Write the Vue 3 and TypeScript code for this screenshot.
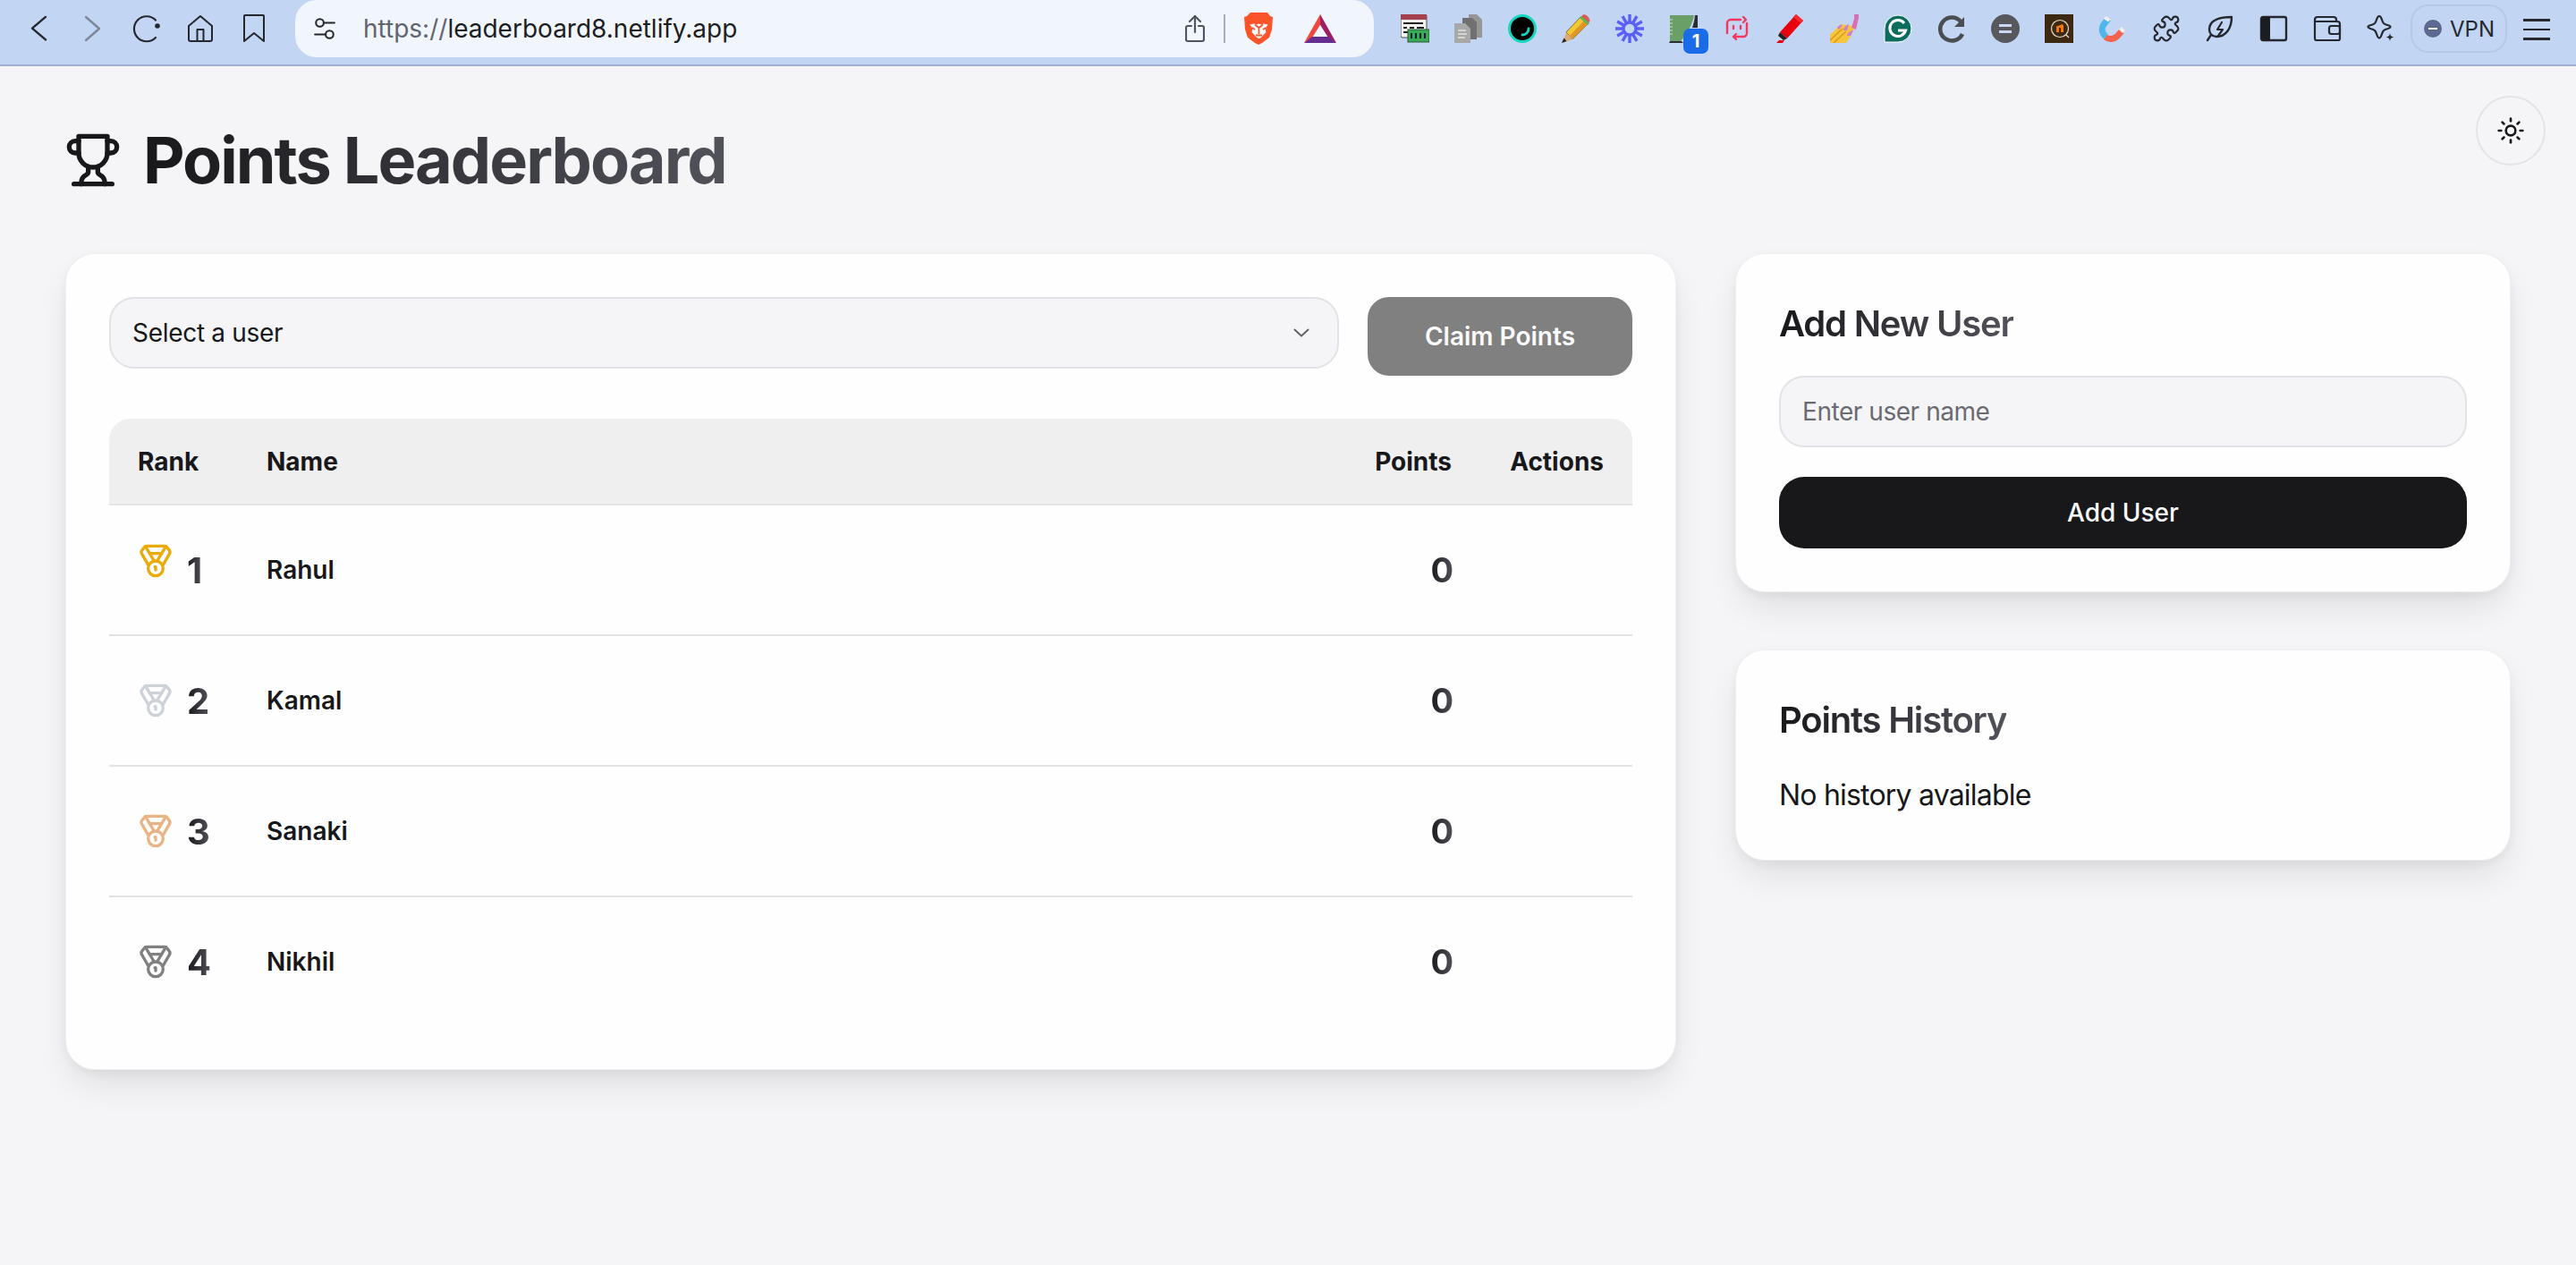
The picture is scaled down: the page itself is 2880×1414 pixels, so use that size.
<template>
  <div class="page">
    <header class="toolbar">
      <div class="nav">
        <span class="slot">
          <svg class="ico-32" viewBox="0 0 32 32" fill="none" stroke="#24272e" stroke-width="2.4" stroke-linecap="round" stroke-linejoin="round"><path d="M24 3 9 16l15 13" transform="translate(-1 0) scale(1 .98)" /></svg>
        </span>
        <span class="slot">
          <svg class="ico-32" viewBox="0 0 32 32" fill="none" stroke="#7c8799" stroke-width="2.4" stroke-linecap="round" stroke-linejoin="round"><path d="m8 3 15 13L8 29" /></svg>
        </span>
        <span class="slot">
          <svg class="ico-32" viewBox="0 0 32 32" fill="none" stroke="#24272e" stroke-width="2.2" stroke-linecap="round"><path d="M26 6.500a14 14 0 1 0 0 19.500" /><circle cx="28" cy="13" r="2.800" fill="#24272e" stroke="none" /></svg>
        </span>
        <span class="slot">
          <svg class="ico-32" viewBox="0 0 32 32" fill="none" stroke="#24272e" stroke-width="2" stroke-linejoin="round"><path d="M3 13 16 2l13 11v15a2 2 0 0 1-2 2H5a2 2 0 0 1-2-2Z" /><path d="M12.500 30V17h7v13" /></svg>
        </span>
        <span class="slot">
          <svg class="ico-32" viewBox="0 0 32 32" fill="none" stroke="#24272e" stroke-width="2" stroke-linejoin="round"><path d="M6 1h20a1 1 0 0 1 1 1v28l-11-9-11 9V2a1 1 0 0 1 1-1Z" /></svg>
        </span>
      </div>

      <div class="urlbar">
        <svg class="tune" viewBox="0 0 24 24" fill="none" stroke="#24272e" stroke-width="1.9" stroke-linecap="round"><circle cx="7" cy="6" r="4" /><path d="M11 6h11" /><circle cx="17" cy="18" r="4" /><path d="M2 18h11" /></svg>
        <span class="url"><span class="url-scheme">https://</span>leaderboard8.netlify.app</span>
        <svg class="share" viewBox="0 0 22 32" fill="none" stroke="#4f5560" stroke-width="2.2" stroke-linecap="round" stroke-linejoin="round"><path d="M11 20V2" /><path d="M5 8l6-6 6 6" /><path d="M7 13H3a2 2 0 0 0-2 2v13a2 2 0 0 0 2 2h16a2 2 0 0 0 2-2V15a2 2 0 0 0-2-2h-4" /></svg>
        <span class="url-sep"></span>
        <svg class="brave" viewBox="0 0 33 36">
          <path d="M7 0h19l3 4 3 1-1 14-3 9-8 6-4 2-4-2-8-6-3-9L0 5l3-1Z" fill="#fb542b" />
          <path d="M16.500 29c-2 0-4-2.500-5-4l-3-3 1-4-3-4.500 4.500-1 2.500 1 3-1 3 1 2.500-1 4.500 1-3 4.500 1 4-3 3c-1 1.500-3 4-5 4Z" fill="#fff" />
          <path d="M12 13.500l4.500 3.500 4.500-3.500M16.500 17v7M13 25.500h7M9 17l3 2M24 17l-3 2" fill="none" stroke="#fb542b" stroke-width="1.800" />
        </svg>
        <svg class="bat" viewBox="0 0 36 32">
          <path d="M18 0 0 32l9-6 9-14Z" fill="#f0483e" />
          <path d="M18 0 36 32l-9-6-9-14Z" fill="#9e1f63" />
          <path d="M0 32h36l-9-7H9Z" fill="#662d91" />
          <path d="M18 12 10.500 25h15Z" fill="#f1f5fc" />
        </svg>
      </div>

      <div class="extensions">
        <span class="ext">
          <svg class="ico-32" viewBox="0 0 32 32">
            <rect x="0" y="0" width="29" height="26" rx="2" fill="#f3f1f0" stroke="#4b4b4b" />
            <rect x="0" y="0" width="29" height="6" fill="#a5404f" />
            <path d="M3 10h22M3 15h4m3 0h5m3 0h8M3 20h8" stroke="#222" stroke-width="2" />
            <rect x="8" y="17" width="24" height="14" fill="#39a857" stroke="#2d5a3a" />
            <path d="M12 21v6m5-6v6m5-6v6m5-6v6" stroke="#123" stroke-width="2" />
          </svg>
        </span>
        <span class="ext">
          <svg class="ico-32" viewBox="0 0 32 32">
            <path d="M16 0h9l6 6v20H16Z" fill="#969696" />
            <path d="M9 4h11l5 5v19H9Z" fill="#707070" />
            <path d="M0 10h12l6 6v16H0Z" fill="#a8a8a8" />
            <path d="M4 18h9M4 22h10M4 26h8" stroke="#e2e2e2" stroke-width="1.500" />
          </svg>
        </span>
        <span class="ext">
          <svg class="ico-32" viewBox="0 0 32 32"><circle cx="16" cy="16" r="14.500" fill="#000" stroke="#16d6c0" stroke-width="3" /><path d="M23 16c0 4-3 7-7 7" fill="none" stroke="#16d6c0" stroke-width="2.800" stroke-linecap="round" /></svg>
        </span>
        <span class="ext">
          <svg class="ico-32" viewBox="0 0 32 32">
            <path d="M5 20 21 3l8 8-17 17Z" fill="#f4c92f" stroke="#3a2a10" stroke-width=".6" />
            <path d="M9 24 25 7l4 4-17 17Z" fill="#e2962a" />
            <path d="M21 3l3-2.500c3-1 7 3 7.500 7L29 11Z" fill="#dd5a52" />
            <path d="M20 4l9 8 2-2-9-8Z" fill="#63b35a" />
            <path d="M5 20l7 8L1 32Z" fill="#d9ab7a" />
            <path d="M2.500 26.500l3 3.500L0 32Z" fill="#222" />
          </svg>
        </span>
        <span class="ext">
          <svg class="ico-32" viewBox="0 0 32 32" fill="none" stroke="#5a5ff5" stroke-width="3.400"><circle cx="16" cy="16" r="7" /><path d="M16 9V0M19.500 9.940 24 2.140M22.060 12.500 29.860 8M23 16h9M22.060 19.500 29.860 24M19.500 22.060 24 29.860M16 23v9M12.500 22.060 8 29.860M9.940 19.500 2.140 24M9 16H0M9.940 12.500 2.140 8M12.500 9.940 8 2.140" /></svg>
        </span>
        <span class="ext">
          <svg class="ico-32" viewBox="0 0 32 32">
            <path d="M1 1h27c-2 10-7 20-15 29H1Z" fill="#6a9f68" />
            <path d="M29 1h3v14h-6c1.500-4.500 2.500-9 3-14Z" fill="#2a2d33" />
            <path d="M0 32l1-2h13l2 2Z" fill="#2a2d33" />
            <path d="M1 6h3M1 10h3M1 14h3M1 18h3M1 22h3" stroke="#cfe0d0" stroke-width="1" />
          </svg>
          <span class="badge">1</span>
        </span>
        <span class="ext">
          <svg class="ico-32" viewBox="0 0 32 32" fill="none" stroke="#f5375f" stroke-width="2.400" stroke-linecap="round" stroke-linejoin="round"><path d="M20 6H9a4 4 0 0 0-4 4v11" /><path d="M27 10v11a4 4 0 0 1-4 4H12" /><path d="M23 3l3 3-3 3M15 22l-3 3 3 3" /><path d="M12 13v3M20 13v3" /></svg>
        </span>
        <span class="ext">
          <svg class="ico-32" viewBox="0 0 32 32">
            <path d="M22 0 30 7 12 27 4 20Z" fill="#e8000f" />
            <path d="M22 0 30 7 27 10 19 3Z" fill="#ff2a2a" />
            <path d="M4 20l8 7-4 2-6-5Z" fill="#222" />
            <path d="M3 29h6l-2 3H0Z" fill="#e8000f" />
          </svg>
        </span>
        <span class="ext">
          <svg class="ico-32" viewBox="0 0 32 32">
            <path d="M0 23 12 11l16 2-4 10-6 9H0Z" fill="#f7c53c" />
            <path d="M0 29 14 16M4 32l14-13" stroke="#d99a1f" stroke-width="1.500" />
            <path d="M8 15c1-2 4-4 6-3l-4 5ZM15 18c0-3 3-6 6-7l-2 7ZM19 24c0-3 4-6 7-6l-3 6Z" fill="#cf7fd0" />
            <path d="M27 0h5v4l-3 13-5-2 3-10Z" fill="#d870b8" />
          </svg>
        </span>
        <span class="ext">
          <svg class="ico-32" viewBox="0 0 32 32"><path d="M16 1a15 15 0 0 1 0 30H1V16A15 15 0 0 1 16 1Z" fill="#0b6d5c" stroke="#fff" stroke-width="1" /><path d="M23 10a9 9 0 1 0 1.500 8H16" fill="none" stroke="#fff" stroke-width="3" /></svg>
        </span>
        <span class="ext">
          <svg class="ico-32" viewBox="0 0 32 32" fill="none"><path d="M26 8A13 13 0 1 0 28 22" stroke="#4b4d52" stroke-width="4.500" /><path d="M30 3v11H19Z" fill="#4b4d52" /></svg>
        </span>
        <span class="ext">
          <svg class="ico-32" viewBox="0 0 32 32"><circle cx="16" cy="16" r="16" fill="#56585c" /><path d="M9 12.500h14M9 19.500h14" stroke="#c9d8ef" stroke-width="3" /></svg>
        </span>
        <span class="ext">
          <svg class="ico-32" viewBox="0 0 32 32"><rect width="32" height="32" fill="#3d2812" /><circle cx="17" cy="16" r="9.500" fill="none" stroke="#e6ddd0" stroke-width="1.200" /><path d="m24 23 3 3" stroke="#e6ddd0" stroke-width="1.200" /><path d="M12 14l8-3 1 2v7h-3v-5h-2v5h-3v-6Z" fill="#f07a10" /></svg>
        </span>
        <span class="ext">
          <svg class="ico-32" viewBox="0 0 32 32" fill="none">
            <path d="M11 5 5.500 12a10 10 0 0 0 3 13" stroke="#4fb6ec" stroke-width="7" />
            <path d="M8 25.500a10 10 0 0 0 13-1L26 19" stroke="#f4634f" stroke-width="7" />
            <path d="m8.500 2 5 3.500L11 8.500 6 5Z" fill="#eee" />
            <path d="m26 14 4 4-3 3-4-4Z" fill="#eee" />
          </svg>
        </span>
        <span class="ext">
          <svg class="ico-32" viewBox="0 0 24 24" fill="none" stroke="#24272e" stroke-width="1.600" stroke-linejoin="round"><path d="M15.390 4.390a1 1 0 0 0 1.680-.474 2.500 2.500 0 1 1 3.014 3.015 1 1 0 0 0-.474 1.680l1.683 1.682a2.414 2.414 0 0 1 0 3.414L19.610 15.390a1 1 0 0 1-1.680-.474 2.500 2.500 0 1 0-3.014 3.015 1 1 0 0 1 .474 1.680l-1.683 1.682a2.414 2.414 0 0 1-3.414 0L8.610 19.610a1 1 0 0 0-1.680.474 2.500 2.500 0 1 1-3.014-3.015 1 1 0 0 0 .474-1.680l-1.683-1.682a2.414 2.414 0 0 1 0-3.414L4.390 8.610a1 1 0 0 1 1.680.474 2.500 2.500 0 1 0 3.014-3.015 1 1 0 0 1-.474-1.680l1.683-1.682a2.414 2.414 0 0 1 3.414 0Z" /></svg>
        </span>
        <span class="ext">
          <svg class="ico-32" viewBox="0 0 32 32" fill="none" stroke="#24272e" stroke-width="2.400" stroke-linecap="round" stroke-linejoin="round"><path d="M29 3C18 3 4 5 4 17c0 4 3 8 8 8 11 0 17-10 17-22Z" /><path d="m2 29 4-6" /><path d="m18 9-5 8h6l-5 7" stroke-width="2.200" /></svg>
        </span>
        <span class="ext">
          <svg class="ico-32" viewBox="0 0 32 32"><rect x="2" y="3" width="28" height="26" rx="2" fill="none" stroke="#24272e" stroke-width="2.400" /><path d="M2 5a2 2 0 0 1 2-2h8v26H4a2 2 0 0 1-2-2Z" fill="#1b1d22" /></svg>
        </span>
        <span class="ext">
          <svg class="ico-32" viewBox="0 0 32 32" fill="none" stroke="#24272e" stroke-width="2.200" stroke-linejoin="round"><path d="M2 8V6a3 3 0 0 1 3-3h18a3 3 0 0 1 3 3v2" /><path d="M2 8h25a3 3 0 0 1 3 3v16a2 2 0 0 1-2 2H4a2 2 0 0 1-2-2Z" /><rect x="18" y="13" width="12" height="9" rx="2.500" /></svg>
        </span>
        <span class="ext">
          <svg class="ico-32" viewBox="0 0 32 32">
            <path d="M14 2c1.500 0 2 1 2.800 3.500C18 9.500 19 11 23 12c2.500.6 3.500 1 3.500 2s-1 1.500-3.500 2.200c-4 1-5 2.500-6.200 6.300C16 25 15.500 26.500 14 26.500s-2-1.500-2.800-4c-1.200-3.800-2.200-5.300-6.200-6.300C2.500 15.500 1.500 15 1.500 14s1-1.400 3.500-2c4-1 5-2.500 6.200-6.500C12 3 12.500 2 14 2Z" fill="none" stroke="#24272e" stroke-width="2.200" stroke-linejoin="round" />
            <path d="M26 21c.4 3 1.600 4.200 4.500 4.500-2.900.4-4.100 1.500-4.500 4.500-.4-3-1.600-4.100-4.500-4.500 2.900-.3 4.100-1.500 4.500-4.500Z" fill="#24272e" />
          </svg>
        </span>
      </div>

      <div class="vpn">
        <span class="vpn-dot"></span>
        <span>VPN</span>
      </div>
      <div class="burger"><span></span><span></span><span></span></div>
    </header>

    <button class="theme-toggle" type="button" aria-label="Toggle theme">
      <svg class="sun" viewBox="0 0 24 24" fill="none" stroke="#18181b" stroke-width="2" stroke-linecap="round" stroke-linejoin="round">
        <circle cx="12" cy="12" r="4" />
        <path d="M12 2v2" /><path d="M12 20v2" />
        <path d="m4.930 4.930 1.410 1.410" /><path d="m17.660 17.660 1.410 1.410" />
        <path d="M2 12h2" /><path d="M20 12h2" />
        <path d="m6.340 17.660-1.410 1.410" /><path d="m19.070 4.930-1.410 1.410" />
      </svg>
    </button>

    <main class="content">
      <div class="title-row">
        <svg class="trophy" viewBox="0 0 24 24" fill="none" stroke="#18181b" stroke-width="2" stroke-linecap="round" stroke-linejoin="round">
          <path d="M6 9H4.500a2.500 2.500 0 0 1 0-5H6" />
          <path d="M18 9h1.500a2.500 2.500 0 0 0 0-5H18" />
          <path d="M4 22h16" />
          <path d="M10 14.660V17c0 .55-.47.98-.97 1.210C7.850 18.750 7 20.240 7 22" />
          <path d="M14 14.660V17c0 .55.47.98.97 1.210C16.150 18.750 17 20.240 17 22" />
          <path d="M18 2H6v7a6 6 0 0 0 12 0V2Z" />
        </svg>
        <h1 class="gradient">Points Leaderboard</h1>
      </div>

      <div class="columns">
        <section class="card board">
          <div class="claim-row">
            <div class="select-wrap">
              <select v-model="selectedUser" class="field user-select">
                <option value="">Select a user</option>
                <option v-for="u in users" :key="u.name" :value="u.name">{{ u.name }}</option>
              </select>
              <svg class="chevron" viewBox="0 0 18 10" fill="none" stroke="#63636b" stroke-width="2" stroke-linecap="round" stroke-linejoin="round"><path d="m1.500 1.500 7.500 7 7.500-7" /></svg>
            </div>
            <button class="claim-btn" type="button" disabled>Claim Points</button>
          </div>

          <table class="rank-table">
            <colgroup>
              <col class="col-rank" />
              <col />
              <col class="col-points" />
              <col class="col-actions" />
            </colgroup>
            <thead>
              <tr>
                <th>Rank</th>
                <th>Name</th>
                <th class="right">Points</th>
                <th class="right">Actions</th>
              </tr>
            </thead>
            <tbody>
              <tr v-for="(u, i) in users" :key="u.name">
                <td>
                  <div class="rank-cell" :class="{ first: i === 0 }">
                    <svg class="medal" viewBox="0 0 24 24" fill="none" :stroke="u.color" stroke-width="2" stroke-linecap="round" stroke-linejoin="round">
                      <path d="M7.210 15 2.660 7.140a2 2 0 0 1 .13-2.200L4.400 2.800A2 2 0 0 1 6 2h12a2 2 0 0 1 1.600.8l1.600 2.140a2 2 0 0 1 .14 2.200L16.790 15" />
                      <path d="M11 12 5.120 2.200" />
                      <path d="m13 12 5.880-9.800" />
                      <path d="M8 7h8" />
                      <circle cx="12" cy="17" r="5" />
                      <path d="M12 18v-2h-.5" />
                    </svg>
                    <span class="rank-num gradient">{{ i + 1 }}</span>
                  </div>
                </td>
                <td class="user-name">{{ u.name }}</td>
                <td class="right"><span class="points gradient">{{ u.points }}</span></td>
                <td></td>
              </tr>
            </tbody>
          </table>
        </section>

        <aside class="side">
          <section class="card">
            <h2 class="gradient">Add New User</h2>
            <input v-model="newUser" class="field name-input" type="text" placeholder="Enter user name" />
            <button class="add-btn" type="button">Add User</button>
          </section>
          <section class="card">
            <h2 class="gradient">Points History</h2>
            <p class="empty">No history available</p>
          </section>
        </aside>
      </div>
    </main>
  </div>
</template>

<script setup lang="ts">
import { ref } from 'vue';

interface User {
  name: string;
  points: number;
  color: string;
}

const users: User[] = [
  { name: 'Rahul', points: 0, color: '#eaaa08' },
  { name: 'Kamal', points: 0, color: '#cdd1d8' },
  { name: 'Sanaki', points: 0, color: '#e9b384' },
  { name: 'Nikhil', points: 0, color: '#808080' }
];

const selectedUser = ref('');
const newUser = ref('');
</script>

<style>
html,
body {
  margin: 0;
  background: #f5f5f7;
}
</style>

<style scoped>
.page {
  min-height: 100vh;
  background: #f5f5f7;
  color: #18181b;
  font-family: Inter, 'Liberation Sans', sans-serif;
}

/* browser chrome */
.toolbar {
  height: 72px;
  display: flex;
  align-items: flex-start;
  background: #c2d6f4;
  border-bottom: 2px solid #9fafcf;
  color: #24272e;
}

.nav {
  display: flex;
  padding-left: 14px;
  margin-right: 16px;
}

.slot {
  width: 60px;
  height: 64px;
  display: flex;
  align-items: center;
  justify-content: center;
}

.ico-32 {
  width: 32px;
  height: 32px;
  display: block;
}

.urlbar {
  width: 1206px;
  height: 64px;
  display: flex;
  align-items: center;
  background: #f1f5fc;
  border-radius: 24px;
  margin-right: 30px;
}

.tune {
  width: 26px;
  height: 26px;
  margin-left: 20px;
}

.url {
  margin-left: 30px;
  flex: 1;
  font-size: 28px;
  color: #1c1e24;
}

.url-scheme {
  color: #5f6570;
}

.share {
  width: 22px;
  height: 32px;
}

.url-sep {
  width: 2px;
  height: 32px;
  margin: 0 21px;
  background: #a9adb5;
}

.brave {
  width: 33px;
  height: 36px;
}

.bat {
  width: 36px;
  height: 32px;
  margin: 0 42px 0 34px;
}

.extensions {
  display: flex;
  gap: 28px;
  padding-top: 16px;
}

.ext {
  position: relative;
  width: 32px;
  height: 32px;
}

.badge {
  position: absolute;
  left: 16px;
  top: 16px;
  width: 28px;
  height: 28px;
  border-radius: 7px;
  background: #1a6be8;
  color: #fff;
  font-size: 20px;
  font-weight: 700;
  line-height: 28px;
  text-align: center;
}

.vpn {
  width: 108px;
  height: 54px;
  box-sizing: border-box;
  margin: 5px 0 0 17px;
  padding-left: 13px;
  display: flex;
  align-items: center;
  gap: 9px;
  border: 2px solid #b6c9e7;
  border-radius: 20px;
  font-size: 24px;
  color: #24272e;
}

.vpn-dot {
  position: relative;
  width: 20px;
  height: 20px;
  border-radius: 50%;
  background: #5d6a8f;
}

.vpn-dot::after {
  content: '';
  position: absolute;
  left: 5px;
  top: 9px;
  width: 10px;
  height: 2px;
  background: #fff;
}

.burger {
  width: 30px;
  margin: 21px 0 0 18px;
  display: flex;
  flex-direction: column;
  gap: 8px;
}

.burger span {
  height: 2.500px;
  background: #24272e;
}

/* app */
.theme-toggle {
  position: absolute;
  top: 107px;
  left: 2768px;
  width: 78px;
  height: 78px;
  padding: 0;
  display: flex;
  align-items: center;
  justify-content: center;
  background: #f5f5f7;
  border: 2px solid #e4e4e7;
  border-radius: 50%;
}

.sun {
  width: 32px;
  height: 32px;
}

.content {
  padding: 51px 74px 0 74px;
}

.title-row {
  display: flex;
  align-items: center;
  gap: 24px;
  margin: 0 0 51px -2px;
}

.trophy {
  width: 64px;
  height: 64px;
  flex-shrink: 0;
}

.gradient {
  background: linear-gradient(90deg, #18181b, #52525b);
  -webkit-background-clip: text;
  background-clip: text;
  color: transparent;
}

h1 {
  margin: 0;
  font-size: 72px;
  line-height: 108px;
  font-weight: 700;
  letter-spacing: -2px;
}

.columns {
  display: grid;
  grid-template-columns: 1fr 865px;
  gap: 68px;
  align-items: start;
}

.card {
  box-sizing: border-box;
  padding: 48px;
  background: #fefefe;
  border-radius: 32px;
  box-shadow: 0 0 0 1px #efeff1, 0 20px 40px -8px rgba(24, 24, 27, 0.12), 0 4px 12px rgba(24, 24, 27, 0.05);
}

.claim-row {
  display: flex;
  align-items: flex-start;
  gap: 32px;
  margin-bottom: 48px;
}

.select-wrap {
  position: relative;
  flex: 1;
}

.field {
  width: 100%;
  height: 80px;
  box-sizing: border-box;
  padding: 0 24px;
  background: #f5f5f7;
  border: 2px solid #e2e2e7;
  border-radius: 28px;
  color: #18181b;
  font-family: inherit;
  font-size: 28px;
  outline: none;
}

.user-select {
  appearance: none;
  display: block;
  letter-spacing: -0.3px;
}

.chevron {
  position: absolute;
  right: 33px;
  top: 35px;
  width: 18px;
  height: 10px;
}

.claim-btn {
  width: 296px;
  height: 88px;
  border: none;
  border-radius: 24px;
  background: #808080;
  color: #fafafa;
  font-family: inherit;
  font-size: 28px;
  font-weight: 600;
}

.rank-table {
  width: 100%;
  table-layout: fixed;
  border-collapse: separate;
  border-spacing: 0;
  font-size: 28px;
}

.col-rank {
  width: 144px;
}

.col-points {
  width: 190px;
}

.col-actions {
  width: 170px;
}

th {
  height: 95px;
  padding: 0 32px;
  background: #efeff0;
  border-bottom: 2px solid #e2e2e7;
  text-align: left;
  font-weight: 700;
}

th:first-child {
  border-top-left-radius: 24px;
}

th:last-child {
  border-top-right-radius: 24px;
}

td {
  height: 144px;
  padding: 0 32px;
  border-bottom: 2px solid #e2e2e7;
}

tbody tr:last-child td {
  border-bottom: none;
}

.right {
  text-align: right;
}

.rank-cell {
  display: flex;
  align-items: center;
  gap: 15px;
  margin-right: -32px;
}

.medal {
  width: 40px;
  height: 40px;
  flex-shrink: 0;
}

.rank-cell.first .medal {
  transform: translateY(-10px);
}

.rank-num {
  font-size: 40px;
  font-weight: 700;
}

.user-name {
  font-weight: 600;
}

.points {
  font-size: 38px;
  font-weight: 700;
  margin-right: -2px;
}

.side {
  display: flex;
  flex-direction: column;
  gap: 66px;
}

h2 {
  width: fit-content;
  margin: 0 0 28px;
  font-size: 40px;
  line-height: 60px;
  font-weight: 600;
  letter-spacing: -1.2px;
}

.name-input {
  display: block;
  letter-spacing: -0.45px;
}

.name-input::placeholder {
  color: #6a6a73;
}

.add-btn {
  display: block;
  width: 100%;
  height: 80px;
  margin-top: 33px;
  border: none;
  border-radius: 28px;
  background: #18181b;
  color: #fafafa;
  font-family: inherit;
  font-size: 28px;
  font-weight: 500;
}

.empty {
  margin: 30px 0 0;
  font-size: 32px;
  line-height: 48px;
  letter-spacing: -0.8px;
  color: #18181b;
}
</style>
